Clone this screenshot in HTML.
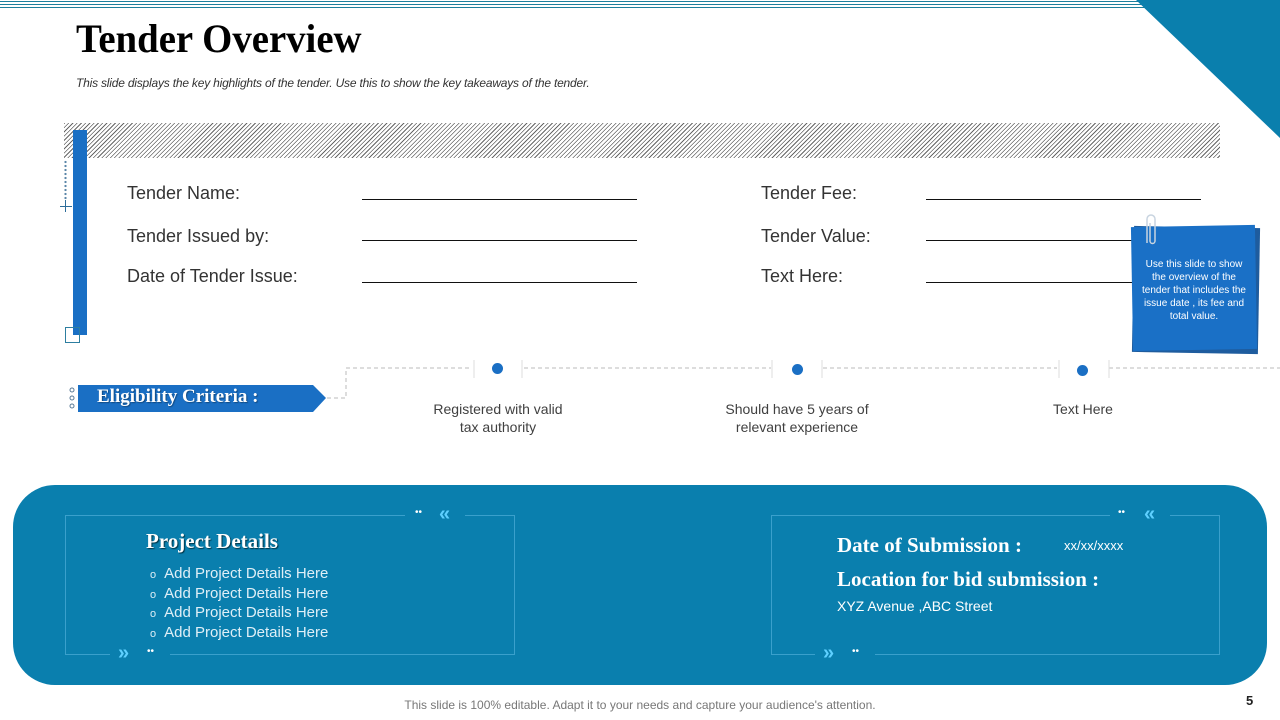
<!DOCTYPE html>
<html><head><meta charset="utf-8"><style>
*{margin:0;padding:0;box-sizing:border-box}
body{width:1280px;height:720px;position:relative;background:#fff;font-family:"Liberation Sans",sans-serif;overflow:hidden}
.a{position:absolute}
.lbl{font-size:18px;color:#333}
.ln{height:1px;background:#111}
.ser{font-family:"Liberation Serif",serif;font-weight:bold}
.crit{font-size:14px;color:#404040;text-align:center;line-height:18px}
.dot{width:11px;height:11px;border-radius:50%;background:#1a6fc4}
.wt{color:#dfeff7;font-size:15px}
.chev{color:#5fd0ff;font-size:20px;font-weight:bold;line-height:20px}
</style></head><body>
<div class="a" style="left:0;top:1px;width:1140px;height:1px;background:#1d7f9c"></div>
<div class="a" style="left:0;top:4px;width:1143px;height:1px;background:#1d7f9c"></div>
<div class="a" style="left:0;top:7px;width:1146px;height:1px;background:#1d7f9c"></div>
<svg class="a" style="left:1136px;top:0" width="144" height="140"><polygon points="0,0 144,0 144,138" fill="#0a7fad"/></svg>
<div class="a ser" style="left:76px;top:15px;font-size:40px;color:#000;transform:scaleX(0.97);transform-origin:left">Tender Overview</div>
<div class="a" style="left:76px;top:76px;font-size:12px;font-style:italic;color:#333;letter-spacing:-0.2px">This slide displays the key highlights of the tender.  Use this to show the key takeaways of the tender.</div>
<div class="a" style="left:64px;top:123px;width:1156px;height:35px;background:repeating-linear-gradient(135deg,#666 0 0.8px,#fff 0.8px 3px)"></div>
<div class="a" style="left:73px;top:130px;width:14px;height:205px;background:#1a6fc4"></div>
<div class="a" style="left:65px;top:327px;width:15px;height:16px;border:1px solid #2d7ea0"></div>
<div class="a" style="left:64px;top:160px;width:3px;height:40px;background:radial-gradient(circle,#5a86a8 1px,transparent 1.3px) 0 0/3px 4px"></div>
<div class="a" style="left:60px;top:206px;width:12px;height:1px;background:#2d6d9a"></div>
<div class="a" style="left:65px;top:200px;width:1px;height:12px;background:#2d6d9a"></div>
<div class="a lbl" style="left:127px;top:183px">Tender Name:</div>
<div class="a lbl" style="left:127px;top:226px">Tender Issued by:</div>
<div class="a lbl" style="left:127px;top:266px">Date of Tender Issue:</div>
<div class="a ln" style="left:362px;top:199px;width:275px"></div>
<div class="a ln" style="left:362px;top:240px;width:275px"></div>
<div class="a ln" style="left:362px;top:282px;width:275px"></div>
<div class="a lbl" style="left:761px;top:183px">Tender Fee:</div>
<div class="a lbl" style="left:761px;top:226px">Tender Value:</div>
<div class="a lbl" style="left:761px;top:266px">Text Here:</div>
<div class="a ln" style="left:926px;top:199px;width:275px"></div>
<div class="a ln" style="left:926px;top:240px;width:210px"></div>
<div class="a ln" style="left:926px;top:282px;width:210px"></div>
<div class="a" style="left:1133px;top:227px;width:126px;height:126px;background:#1e5c9e;transform:rotate(1deg)"></div>
<div class="a" style="left:1132px;top:226px;width:124px;height:124px;background:#1a70c6;transform:rotate(-1deg)"></div>
<div class="a" style="left:1138px;top:258px;width:112px;color:#fff;font-size:10px;text-align:center;line-height:13px">Use this slide to show the overview of the tender that includes the issue date , its fee and total value.</div>
<svg class="a" style="left:1143px;top:213px" width="16" height="36"><path d="M4 30 V6 a4 4 0 0 1 8 0 V28 a2.5 2.5 0 0 1 -5 0 V10" fill="none" stroke="#c8d4e0" stroke-width="1.5"/></svg>
<svg class="a" style="left:320px;top:358px" width="960" height="50"><path d="M7 40 H26 V10 H152 M204 10 H451 M503 10 H737 M789 10 H960" stroke="#bbb" stroke-dasharray="4 3" fill="none"/><path d="M154 2V20M202 2V20M452 2V20M502 2V20M739 2V20M789 2V20" stroke="#ddd"/></svg>
<div class="a dot" style="left:492px;top:363px"></div>
<div class="a dot" style="left:792px;top:364px"></div>
<div class="a dot" style="left:1077px;top:365px"></div>
<div class="a crit" style="left:398px;top:400px;width:200px">Registered with valid<br>tax authority</div>
<div class="a crit" style="left:697px;top:400px;width:200px">Should have 5 years of<br>relevant experience</div>
<div class="a crit" style="left:983px;top:400px;width:200px">Text Here</div>
<svg class="a" style="left:68px;top:384px" width="260" height="30"><circle cx="4" cy="6" r="2" fill="none" stroke="#5a7a96"/><circle cx="4" cy="14" r="2" fill="none" stroke="#5a7a96"/><circle cx="4" cy="22" r="2" fill="none" stroke="#5a7a96"/><polygon points="10,1 245,1 258,14 245,28 10,28" fill="#1a6fc4"/></svg>
<div class="a ser" style="left:97px;top:386px;font-size:19px;color:#fff;text-shadow:1px 1px 1px #124a80">Eligibility Criteria :</div>
<div class="a" style="left:13px;top:485px;width:1254px;height:200px;border-radius:42px;background:#0a7fae"></div>
<div class="a" style="left:65px;top:515px;width:450px;height:140px;border:1px solid #3aa0cc"></div>
<div class="a" style="left:771px;top:515px;width:449px;height:140px;border:1px solid #3aa0cc"></div>
<div class="a" style="left:405px;top:508px;width:60px;height:14px;background:#0a7fae"></div>
<div class="a" style="left:415px;top:507px;color:#fff;font-size:10px">••</div>
<div class="a chev" style="left:439px;top:504px">«</div>
<div class="a" style="left:110px;top:648px;width:60px;height:14px;background:#0a7fae"></div>
<div class="a chev" style="left:118px;top:643px">»</div>
<div class="a" style="left:147px;top:646px;color:#fff;font-size:10px">••</div>
<div class="a" style="left:1110px;top:508px;width:60px;height:14px;background:#0a7fae"></div>
<div class="a" style="left:1118px;top:507px;color:#fff;font-size:10px">••</div>
<div class="a chev" style="left:1144px;top:504px">«</div>
<div class="a" style="left:815px;top:648px;width:60px;height:14px;background:#0a7fae"></div>
<div class="a chev" style="left:823px;top:643px">»</div>
<div class="a" style="left:852px;top:646px;color:#fff;font-size:10px">••</div>
<div class="a ser" style="left:146px;top:529px;font-size:21px;color:#fff;text-shadow:1px 1px 1px #034">Project Details</div>
<div class="a wt" style="left:150px;top:565px;line-height:17.7px">
<div><span style="font-size:11px;margin-right:8px">o</span>Add Project Details Here</div>
<div><span style="font-size:11px;margin-right:8px">o</span>Add Project Details Here</div>
<div><span style="font-size:11px;margin-right:8px">o</span>Add Project Details Here</div>
<div><span style="font-size:11px;margin-right:8px">o</span>Add Project Details Here</div></div>
<div class="a ser" style="left:837px;top:533px;font-size:21px;color:#fff">Date of  Submission :</div>
<div class="a" style="left:1064px;top:538px;font-size:13px;color:#fff">xx/xx/xxxx</div>
<div class="a ser" style="left:837px;top:567px;font-size:21px;color:#fff">Location for bid submission :</div>
<div class="a" style="left:837px;top:598px;font-size:14px;color:#fff">XYZ  Avenue ,ABC Street</div>
<div class="a" style="left:0;top:698px;width:1280px;text-align:center;font-size:12px;color:#777">This slide is 100% editable. Adapt it to your needs and capture your audience's attention.</div>
<div class="a" style="left:1246px;top:693px;font-size:13px;font-weight:bold;color:#222">5</div>
</body></html>
